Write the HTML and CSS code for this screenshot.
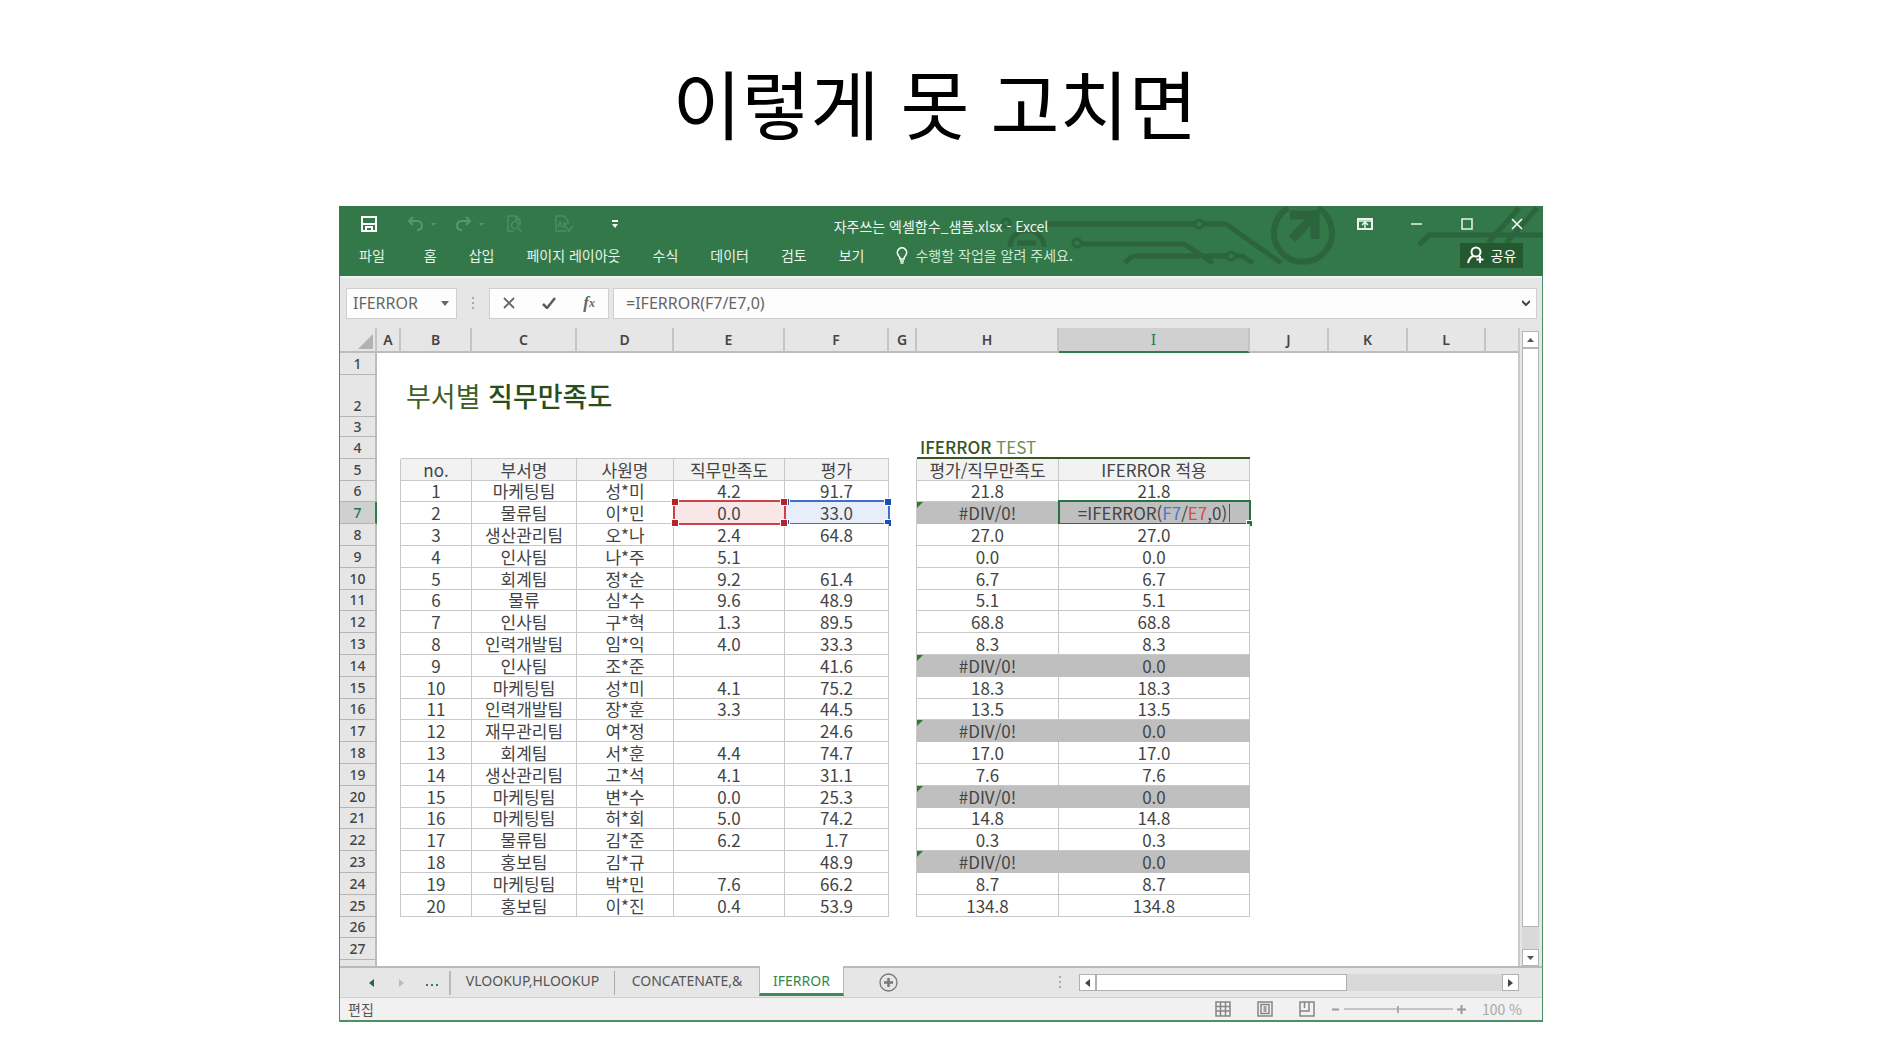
FILE: index.html
```html
<!DOCTYPE html>
<html lang="ko">
<head>
<meta charset="utf-8">
<title>이렇게 못 고치면</title>
<link rel="stylesheet" href="styles.css">
</head>
<body>
<h1 class="headline">이렇게 못 고치면</h1>
<main class="window">
  <header class="ribbon">
    <svg class="circuit" width="543" height="70" viewBox="0 0 543 70" fill="none" stroke="#2b643d" stroke-width="5" aria-hidden="true">
      <circle cx="6" cy="17" r="4" stroke-width="3"/>
      <path d="M45 18H195M203 18H226L281 57"/>
      <circle cx="199" cy="18" r="4" stroke-width="3"/>
      <path d="M10 41a17 17 0 0 1 34 0M17 37h19"/>
      <circle cx="77" cy="37" r="4" stroke-width="3"/>
      <path d="M81 38H184L213 57M125 57q5-7 11-7H226M236 50h6l11 7"/>
      <circle cx="231" cy="50" r="4" stroke-width="3"/>
      <path d="M288 2A29 29 0 1 0 318 2" stroke-width="6"/>
      <path d="M290 9h25v24M292 33L313 11" stroke-width="9"/>
      <path d="M419 39L429 29H543M488 37L519 2M506 37L537 2"/>
    </svg>
    <div class="titlebar">
      <div class="quick">
        <button class="qb save" aria-label="저장"><svg width="16" height="16" viewBox="0 0 16 16" fill="none" stroke="#fff" stroke-width="2"><path d="M1 1h14v14H1zM2 8h12M5 15v-4h6v4"/></svg></button>
        <button class="qb" aria-label="실행 취소"><svg width="30" height="16" viewBox="0 0 30 16" fill="none" stroke="#4f9a73" stroke-width="2"><path d="M6 1L2 5l4 4M2 5h8q5 0 5 5q0 4-5 4"/><path d="M24 7h5l-2.500 3z" fill="#4f9a73" stroke="none"/></svg></button>
        <button class="qb" aria-label="다시 실행"><svg width="30" height="16" viewBox="0 0 30 16" fill="none" stroke="#4f9a73" stroke-width="2"><path d="M11 1l4 4-4 4M15 5H7q-5 0-5 5q0 4 5 4"/><path d="M24 7h5l-2.500 3z" fill="#4f9a73" stroke="none"/></svg></button>
        <button class="qb page" aria-label="인쇄 미리 보기"><svg width="16" height="18" viewBox="0 0 16 18" fill="none" stroke="#4f9a73" stroke-width="1.500"><path d="M7 16H1V1h8l4 4v5M9 1v4h4"/><circle cx="8" cy="10" r="3.500"/><path d="M11 13l4 4"/></svg></button>
        <button class="qb page" aria-label="맞춤법 검사"><svg width="20" height="18" viewBox="0 0 20 18" fill="none" stroke="#4f9a73" stroke-width="1.500"><path d="M12 16H1V1h8l4 5v3M3 12l2-5 2 5M9 7v5h3M9 9h3M12 13l2 3 4-5"/></svg></button>
        <button class="qb more" aria-label="빠른 실행 도구 모음"><svg width="8" height="10" viewBox="0 0 8 10"><path d="M1 1h6v2H1zM1 5h6L4 9z" fill="#fff"/></svg></button>
      </div>
      <div class="doc">자주쓰는 엑셀함수_샘플.xlsx - Excel</div>
      <div class="controls">
        <button aria-label="리본 메뉴 표시 옵션"><svg width="16" height="12" viewBox="0 0 16 12" fill="none" stroke="#e8f3eb"><path d="M1 1h14v10H1z" stroke-width="2"/><path d="M1 3h14M8 10V5M5 7l3-3 3 3" stroke-width="1.500"/></svg></button>
        <button aria-label="최소화"><svg width="12" height="12" viewBox="0 0 12 12"><path d="M0 6h11" stroke="#e8f3eb" stroke-width="1.500"/></svg></button>
        <button aria-label="최대화"><svg width="12" height="12" viewBox="0 0 12 12"><path d="M1 1h10v10H1z" fill="none" stroke="#e8f3eb" stroke-width="1.500"/></svg></button>
        <button aria-label="닫기"><svg width="12" height="12" viewBox="0 0 12 12"><path d="M1 1l10 10M11 1L1 11" stroke="#fff" stroke-width="1.500"/></svg></button>
      </div>
    </div>
    <nav class="menu">
      <a href="#" class="file">파일</a><a href="#">홈</a><a href="#">삽입</a><a href="#">페이지 레이아웃</a><a href="#">수식</a><a href="#">데이터</a><a href="#">검토</a><a href="#">보기</a>
      <a href="#" class="tell"><svg width="12" height="17" viewBox="0 0 12 17" fill="none" stroke="#fff" stroke-width="1.600"><path d="M4 12q0-2-1.500-3.500a4.600 4.600 0 1 1 7 0Q8 10 8 12z"/><path d="M4 14h4M4.500 16h3"/></svg>수행할 작업을 알려 주세요.</a>
      <button class="share"><svg width="18" height="18" viewBox="0 0 18 18" fill="none" stroke="#fff" stroke-width="2"><circle cx="9" cy="6" r="4.500"/><path d="M1 17q1-5 5-7M13 10v7M9.500 13.500h7"/></svg>공유</button>
    </nav>
  </header>

  <section class="formula-bar">
    <div class="name-box"><input aria-label="이름 상자" value="IFERROR"><svg width="8" height="5" viewBox="0 0 8 5"><path d="M0 0h8L4 5z" fill="#666"/></svg></div>
    <svg class="grip" width="3" height="13" viewBox="0 0 3 13" fill="#aaa"><path d="M0 0h2v2H0zM0 5h2v2H0zM0 10h2v2H0z"/></svg>
    <div class="fx-box">
      <button aria-label="취소"><svg width="12" height="12" viewBox="0 0 12 12"><path d="M1 1l10 10M11 1L1 11" stroke="#666" stroke-width="1.800"/></svg></button>
      <button aria-label="입력"><svg width="14" height="12" viewBox="0 0 14 12"><path d="M1 7l4 4 8-10" fill="none" stroke="#5c5c5c" stroke-width="2.500"/></svg></button>
      <button class="fx" aria-label="함수 삽입">f<sub>x</sub></button>
    </div>
    <div class="formula"><input aria-label="수식 입력줄" value="=IFERROR(F7/E7,0)"><svg width="8" height="6" viewBox="0 0 8 6"><path d="M0 1l4 4 4-4" fill="none" stroke="#444" stroke-width="2"/></svg></div>
  </section>

  <section class="sheet">
    <div class="grid">
    <table>
      <colgroup><col class="c-n"><col class="c-a"><col class="c-b"><col class="c-c"><col class="c-d"><col class="c-e"><col class="c-f"><col class="c-g"><col class="c-h"><col class="c-i"><col class="c-j"><col class="c-j"><col class="c-l"><col></colgroup>
      <thead><tr><th class="corner"><svg width="15" height="15" viewBox="0 0 15 15"><path d="M15 0v15H0z" fill="#b2b2b2"/></svg></th><th>A</th><th>B</th><th>C</th><th>D</th><th>E</th><th>F</th><th>G</th><th>H</th><th class="on serif">I</th><th>J</th><th>K</th><th>L</th><th></th></tr></thead>
      <tbody>
      <tr class="r1"><th>1</th><td colspan="13"></td></tr>
      <tr class="r2"><th>2</th><td></td><td colspan="12" class="title">부서별 <b>직무만족도</b></td></tr>
      <tr class="r3"><th>3</th><td colspan="13"></td></tr>
      <tr class="r4"><th>4</th><td></td><td class="b"></td><td class="b"></td><td class="b"></td><td class="b"></td><td class="b"></td><td></td><td class="test" colspan="2"><b>IFERROR</b> TEST</td><td colspan="4"></td></tr>
      <tr class="head"><th>5</th><td class="e"></td><td class="d">no.</td><td class="d">부서명</td><td class="d">사원명</td><td class="d">직무만족도</td><td class="d">평가</td><td class="e"></td><td class="d">평가/직무만족도</td><td class="d">IFERROR 적용</td><td colspan="4"></td></tr>
      <tr><th>6</th><td class="e"></td><td class="d">1</td><td class="d">마케팅팀</td><td class="d">성*미</td><td class="d">4.2</td><td class="d">91.7</td><td class="e"></td><td class="d">21.8</td><td class="d">21.8</td><td colspan="4"></td></tr>
      <tr><th class="on">7</th><td class="e"></td><td class="d">2</td><td class="d">물류팀</td><td class="d">이*민</td><td class="d ref red">0.0<i class="box"><i></i><i></i><i></i><i></i></i></td><td class="d ref blue">33.0<i class="box"><i></i><i></i><i></i><i></i></i></td><td class="e"></td><td class="d err">#DIV/0!</td><td class="d edit">=IFERROR(<span class="t-blue">F7</span>/<span class="t-red">E7</span>,0)<i class="caret"></i><i class="frame"><i></i></i></td><td colspan="4"></td></tr>
      <tr><th>8</th><td class="e"></td><td class="d">3</td><td class="d">생산관리팀</td><td class="d">오*나</td><td class="d">2.4</td><td class="d">64.8</td><td class="e"></td><td class="d">27.0</td><td class="d">27.0</td><td colspan="4"></td></tr>
      <tr><th>9</th><td class="e"></td><td class="d">4</td><td class="d">인사팀</td><td class="d">나*주</td><td class="d">5.1</td><td class="d"></td><td class="e"></td><td class="d">0.0</td><td class="d">0.0</td><td colspan="4"></td></tr>
      <tr><th>10</th><td class="e"></td><td class="d">5</td><td class="d">회계팀</td><td class="d">정*순</td><td class="d">9.2</td><td class="d">61.4</td><td class="e"></td><td class="d">6.7</td><td class="d">6.7</td><td colspan="4"></td></tr>
      <tr><th>11</th><td class="e"></td><td class="d">6</td><td class="d">물류</td><td class="d">심*수</td><td class="d">9.6</td><td class="d">48.9</td><td class="e"></td><td class="d">5.1</td><td class="d">5.1</td><td colspan="4"></td></tr>
      <tr><th>12</th><td class="e"></td><td class="d">7</td><td class="d">인사팀</td><td class="d">구*혁</td><td class="d">1.3</td><td class="d">89.5</td><td class="e"></td><td class="d">68.8</td><td class="d">68.8</td><td colspan="4"></td></tr>
      <tr><th>13</th><td class="e"></td><td class="d">8</td><td class="d">인력개발팀</td><td class="d">임*익</td><td class="d">4.0</td><td class="d">33.3</td><td class="e"></td><td class="d">8.3</td><td class="d">8.3</td><td colspan="4"></td></tr>
      <tr><th>14</th><td class="e"></td><td class="d">9</td><td class="d">인사팀</td><td class="d">조*준</td><td class="d"></td><td class="d">41.6</td><td class="e"></td><td class="d err">#DIV/0!</td><td class="d grey">0.0</td><td colspan="4"></td></tr>
      <tr><th>15</th><td class="e"></td><td class="d">10</td><td class="d">마케팅팀</td><td class="d">성*미</td><td class="d">4.1</td><td class="d">75.2</td><td class="e"></td><td class="d">18.3</td><td class="d">18.3</td><td colspan="4"></td></tr>
      <tr><th>16</th><td class="e"></td><td class="d">11</td><td class="d">인력개발팀</td><td class="d">장*훈</td><td class="d">3.3</td><td class="d">44.5</td><td class="e"></td><td class="d">13.5</td><td class="d">13.5</td><td colspan="4"></td></tr>
      <tr><th>17</th><td class="e"></td><td class="d">12</td><td class="d">재무관리팀</td><td class="d">여*정</td><td class="d"></td><td class="d">24.6</td><td class="e"></td><td class="d err">#DIV/0!</td><td class="d grey">0.0</td><td colspan="4"></td></tr>
      <tr><th>18</th><td class="e"></td><td class="d">13</td><td class="d">회계팀</td><td class="d">서*훈</td><td class="d">4.4</td><td class="d">74.7</td><td class="e"></td><td class="d">17.0</td><td class="d">17.0</td><td colspan="4"></td></tr>
      <tr><th>19</th><td class="e"></td><td class="d">14</td><td class="d">생산관리팀</td><td class="d">고*석</td><td class="d">4.1</td><td class="d">31.1</td><td class="e"></td><td class="d">7.6</td><td class="d">7.6</td><td colspan="4"></td></tr>
      <tr><th>20</th><td class="e"></td><td class="d">15</td><td class="d">마케팅팀</td><td class="d">변*수</td><td class="d">0.0</td><td class="d">25.3</td><td class="e"></td><td class="d err">#DIV/0!</td><td class="d grey">0.0</td><td colspan="4"></td></tr>
      <tr><th>21</th><td class="e"></td><td class="d">16</td><td class="d">마케팅팀</td><td class="d">허*회</td><td class="d">5.0</td><td class="d">74.2</td><td class="e"></td><td class="d">14.8</td><td class="d">14.8</td><td colspan="4"></td></tr>
      <tr><th>22</th><td class="e"></td><td class="d">17</td><td class="d">물류팀</td><td class="d">김*준</td><td class="d">6.2</td><td class="d">1.7</td><td class="e"></td><td class="d">0.3</td><td class="d">0.3</td><td colspan="4"></td></tr>
      <tr><th>23</th><td class="e"></td><td class="d">18</td><td class="d">홍보팀</td><td class="d">김*규</td><td class="d"></td><td class="d">48.9</td><td class="e"></td><td class="d err">#DIV/0!</td><td class="d grey">0.0</td><td colspan="4"></td></tr>
      <tr><th>24</th><td class="e"></td><td class="d">19</td><td class="d">마케팅팀</td><td class="d">박*민</td><td class="d">7.6</td><td class="d">66.2</td><td class="e"></td><td class="d">8.7</td><td class="d">8.7</td><td colspan="4"></td></tr>
      <tr><th>25</th><td class="e"></td><td class="d">20</td><td class="d">홍보팀</td><td class="d">이*진</td><td class="d">0.4</td><td class="d">53.9</td><td class="e"></td><td class="d">134.8</td><td class="d">134.8</td><td colspan="4"></td></tr>
      <tr><th>26</th><td colspan="13"></td></tr>
      <tr><th>27</th><td colspan="13"></td></tr>
      <tr class="r28"><th></th><td colspan="13"></td></tr>
      </tbody>
    </table>
    </div>
    <div class="vscroll">
      <button aria-label="위로"><svg width="7" height="4" viewBox="0 0 7 4"><path d="M0 4h7L3.500 0z" fill="#555"/></svg></button>
      <div class="vthumb"></div><div class="vtrack"></div>
      <button aria-label="아래로"><svg width="7" height="4" viewBox="0 0 7 4"><path d="M0 0h7L3.500 4z" fill="#555"/></svg></button>
    </div>
  </section>

  <section class="tabs">
    <div class="tab-nav">
      <button aria-label="이전 시트"><svg width="5" height="8" viewBox="0 0 5 8"><path d="M5 0v8L0 4z" fill="#1e6b3c"/></svg></button>
      <button aria-label="다음 시트"><svg width="5" height="8" viewBox="0 0 5 8"><path d="M0 0v8l5-4z" fill="#bbb"/></svg></button>
      <button class="dots" aria-label="시트 목록"><svg width="12" height="8" viewBox="0 0 12 8"><path d="M0 5h2v2H0zM5 5h2v2H5zM10 5h2v2h-2z" fill="#2c8049"/></svg></button>
    </div>
    <button class="tab">VLOOKUP,HLOOKUP</button>
    <button class="tab cc">CONCATENATE,&amp;</button>
    <button class="tab active">IFERROR</button>
    <button class="add" aria-label="새 시트"><svg width="19" height="19" viewBox="0 0 19 19" fill="none" stroke="#777"><circle cx="9.500" cy="9.500" r="8.500" stroke-width="1.300"/><path d="M9.500 5v9M5 9.500h9" stroke-width="2.500"/></svg></button>
    <svg class="grip right" width="3" height="13" viewBox="0 0 3 13" fill="#aaa"><path d="M0 0h2v2H0zM0 5h2v2H0zM0 10h2v2H0z"/></svg>
    <div class="hscroll">
      <button aria-label="왼쪽으로"><svg width="5" height="8" viewBox="0 0 5 8"><path d="M5 0v8L0 4z" fill="#444"/></svg></button>
      <div class="hthumb"></div><div class="htrack"></div>
      <button aria-label="오른쪽으로"><svg width="5" height="8" viewBox="0 0 5 8"><path d="M0 0v8l5-4z" fill="#444"/></svg></button>
    </div>
  </section>

  <footer class="status">
    <span class="mode">편집</span>
    <button class="view" aria-label="기본"><svg width="16" height="16" viewBox="0 0 16 16" fill="none" stroke="#858585" stroke-width="1.500"><path d="M1 1h14v14H1zM1 5.500h14M1 10h14M5.500 1v14M10.500 1v14"/></svg></button>
    <button class="view" aria-label="페이지 레이아웃"><svg width="16" height="16" viewBox="0 0 16 16" fill="none" stroke="#858585" stroke-width="1.500"><path d="M1 1h14v14H1zM4 3.500h8v9H4zM6.500 6h3M6.500 8h3M6.500 10h3"/></svg></button>
    <button class="view" aria-label="페이지 나누기 미리 보기"><svg width="16" height="16" viewBox="0 0 16 16" fill="none" stroke="#858585" stroke-width="1.500"><path d="M1 1h14v14H1zM1 10h9V1M5.500 1v6"/></svg></button>
    <button class="zoom" aria-label="축소"><svg width="7" height="7" viewBox="0 0 7 7"><path d="M0 3.500h7" stroke="#999" stroke-width="2"/></svg></button>
    <input class="slider" type="range" aria-label="확대/축소" value="50">
    <button class="zoom" aria-label="확대"><svg width="9" height="9" viewBox="0 0 9 9"><path d="M0 4.500h9M4.500 0v9" stroke="#999" stroke-width="2"/></svg></button>
    <span class="pct">100 %</span>
  </footer>
</main>
</body>
</html>
```
FILE: styles.css
```css
* { box-sizing: border-box; }
body {
  margin: 0;
  background: #fff;
  color: #444;
  font-family: "Noto Sans", "Noto Sans CJK KR", sans-serif;
}
button {
  display: flex;
  align-items: center;
  justify-content: center;
  margin: 0;
  padding: 0;
  border: 0;
  background: none;
  color: inherit;
  font: inherit;
}
input { border: 0; margin: 0; padding: 0; background: none; outline: 0; min-width: 0; color: inherit; font: inherit; }
svg { display: block; flex: none; }

.headline {
  margin: 0;
  padding: 52px 12px 54px 0;
  text-align: center;
  font: 400 75px/100px "Noto Sans CJK KR", sans-serif;
  color: #000;
}
.window {
  width: calc(100% - 48px);
  max-width: 1204px;
  margin: 0 auto 31px;
  border: 1px solid #4f8f68;
  border-bottom-width: 2px;
  background: #e6e6e6;
}

/* Ribbon */
.ribbon { position: relative; height: 70px; margin: -1px -1px 0; padding: 0 20px; overflow: hidden; background: #337848; color: #e9f4ec; font: 14px/20px "Noto Sans CJK KR", sans-serif; }
.circuit { position: absolute; right: 0; top: 0; }
.titlebar, .menu { position: relative; display: flex; align-items: center; }
.titlebar { display: grid; grid-template-columns: 1fr auto 1fr; height: 35px; }
.quick { display: flex; align-items: center; gap: 18px; padding-left: 2px; }
.save { margin-right: 12px; }
.page { margin-left: 4px; opacity: .7; }
.quick .page + .page { margin-left: 14px; }
.more { margin-left: 18px; }
.doc { padding-top: 4px; color: #eef6f0; }
.controls { display: flex; justify-content: flex-end; gap: 38px; }
.menu { gap: 32px; height: 28px; }
.menu a { color: inherit; text-decoration: none; white-space: nowrap; }
.menu .file { margin-right: 7px; }
.menu .tell { display: flex; align-items: center; gap: 7px; color: #cfe8d6; }
.share { gap: 6px; width: 63px; height: 25px; margin-left: auto; background: #24592f; color: #fff; }

/* Formula bar */
.formula-bar { display: flex; align-items: center; height: 52px; padding: 0 5px 0 6px; border-top: 2px solid #f4f1f3; font-size: 16px; color: #666; }
.name-box, .fx-box, .formula { display: flex; align-items: center; height: 31px; border: 1px solid #cfcfcf; background: #fdfdfd; }
.name-box { width: 111px; padding: 0 7px 0 6px; }
.name-box input, .formula input { flex: 1; width: 0; height: 28px; }
.grip { margin: 0 14px 0 15px; }
.fx-box { width: 120px; padding: 0 13px; justify-content: space-between; }
.fx { font: italic 700 17px/20px "Liberation Serif", serif; }
.fx sub { font-size: 12px; line-height: 12px; }
.formula { flex: 1; margin-left: 4px; padding: 0 6px 0 12px; }

/* Sheet */
.sheet { display: flex; gap: 2px; padding-right: 3px; }
.grid { flex: 1; min-width: 0; overflow: hidden; border-right: 2px solid #c9c9c9; }
table { width: 100%; table-layout: fixed; border-spacing: 0; }
.c-n { width: 37px; } .c-a { width: 24px; } .c-b { width: 71px; } .c-c { width: 105px; }
.c-d { width: 97px; } .c-e { width: 111px; } .c-f { width: 104px; } .c-g { width: 28px; }
.c-h { width: 142px; } .c-i { width: 191px; } .c-j { width: 79px; } .c-l { width: 78px; }
th, td { height: 22px; padding: 0; overflow: visible; white-space: nowrap; text-align: center; }
th { background: #e6e6e6; color: #444; font-size: 14px; font-weight: 500; line-height: 20px; }
td { background: #fff; font: 17px/20px "Noto Sans CJK KR", sans-serif; }
thead th { height: 25px; border-right: 2px solid #c4c4c4; border-bottom: 2px solid #bdbdbd; font-weight: 600; }
thead th:last-child { border-right: 0; }
thead .on { background: #d0d0d0; border-bottom-color: #2f7d4d; color: #217346; }
.serif { font-family: "DejaVu Serif", serif; font-weight: 400; }
.corner svg { margin: 4px 0 0 18px; }
tbody th { border-right: 2px solid #bdbdbd; border-bottom: 1px solid #b5b5b5; }
tbody .on { background: #d0d0d0; border-right-color: #2f7d4d; color: #217346; }
tbody tr:nth-child(5n+6) > * { height: 21px; }
tbody tr:nth-child(n+5) > * { line-height: 18px; }
.r2 > * { height: 42px; }
.r3 > * { height: 20px; line-height: 18px; }
.r2 th { vertical-align: bottom; line-height: 20px; }
tbody .r28 > * { height: 6px; border-bottom: 0; }
.title { padding: 0 0 0 5px; text-align: left; color: #3c5f27; font-size: 27px; line-height: 36px; }
.title b { font-weight: 500; color: #2b4d17; }
.test { padding-left: 3px; border-bottom: 2px solid #375623; text-align: left; color: #6c8d5c; font-size: 17px; line-height: 18px; }
.test b { font-weight: 500; color: #375623; }
.b { border-bottom: 1px solid #c8c8c8; }
.e { border-right: 1px solid #c8c8c8; }
.d { position: relative; border-right: 1px solid #c8c8c8; border-bottom: 1px solid #c8c8c8; }
.head .d { background: #f2f2f2; }
.err, .grey, .edit { background: #bfbfbf; border-color: #bfbfbf; }
.err::before { content: ""; position: absolute; left: 0; top: 0; border: 3px solid transparent; border-top-color: #2b7d2b; border-left-color: #2b7d2b; }
.t-blue { color: #4a78cf; }
.t-red { color: #d9474f; }

/* Range highlights */
.red { background: #f9e7e7; --line: #c8434b; --knob: #b92227; }
.blue { background: #e8eef9; --line: #3f6fcb; --knob: #164fbd; }
.box, .frame { position: absolute; inset: -2px -2px -2px -1px; border: 2px solid var(--line); }
.box i { position: absolute; width: 6px; height: 6px; background: var(--knob); box-shadow: 0 0 0 1px #fff; }
.box i:nth-child(1) { left: -3px; top: -3px; }
.box i:nth-child(2) { right: -3px; top: -3px; }
.box i:nth-child(3) { left: -3px; bottom: -3px; }
.box i:nth-child(4) { right: -3px; bottom: -3px; }
.red .box { z-index: 2; }
.frame { --line: #257245; }
.frame i { position: absolute; right: -3px; bottom: -3px; width: 5px; height: 5px; background: #257245; box-shadow: 0 0 0 1px #fff; }
.caret { display: inline-block; width: 1px; height: 18px; margin-left: 2px; background: #555; vertical-align: top; }

/* Scroll bars */
.vscroll { display: flex; flex-direction: column; width: 17px; margin-top: 3px; background: #d9d9d9; }
.vscroll button { height: 17px; border: 1px solid #b5b5b5; background: #fff; }
.vthumb { flex: 26; border: 1px solid #b5b5b5; background: #fff; }
.vtrack { flex: 1; }
.hscroll { display: flex; width: 440px; height: 17px; background: #d9d9d9; }
.hscroll button { width: 17px; border: 1px solid #b0b0b0; background: #fff; }
.hthumb { flex: 8; border: 1px solid #b0b0b0; background: #fff; }
.htrack { flex: 5; }

/* Sheet tabs */
.tabs { display: flex; align-items: center; height: 31px; padding-right: 23px; border-top: 2px solid #b9b9b9; font-size: 14px; line-height: 20px; color: #555; }
.tab-nav { display: flex; align-items: center; gap: 25px; width: 111px; height: 24px; padding-left: 29px; border-right: 2px solid #b9b9b9; }
.dots { margin-left: -3px; }
.tab { width: 164px; height: 24px; padding-bottom: 3px; border-right: 1px solid #a9a9a9; }
.cc { width: 144px; border-right: 0; }
.tab.active { align-self: flex-start; width: 85px; height: 30px; margin-top: -2px; padding: 2px 0 0; border: 1px solid #b9b9b9; border-width: 0 1px 3px; border-bottom-color: #3b8b5b; background: #fff; color: #2f8a4f; }
.add { margin-left: 35px; }
.grip.right { margin: 0 17px 0 auto; }

/* Status bar */
.status { display: flex; align-items: center; height: 23px; padding: 0 20px 0 8px; border-top: 1px solid #cfcfcf; background: #f1f1f1; font: 14px/20px "Noto Sans CJK KR", sans-serif; }
.mode { margin-right: auto; color: #555; }
.view { margin-right: 26px; }
.view + .zoom { margin-left: -9px; }
.slider { width: 109px; height: 10px; margin: 0 4px 0 5px; appearance: none; background: linear-gradient(#c4c4c4, #c4c4c4) center / 100% 2px no-repeat; }
.slider::-webkit-slider-thumb { appearance: none; width: 2px; height: 7px; background: #aaa; }
.pct { margin-left: 16px; color: #a8a8a8; }
```
